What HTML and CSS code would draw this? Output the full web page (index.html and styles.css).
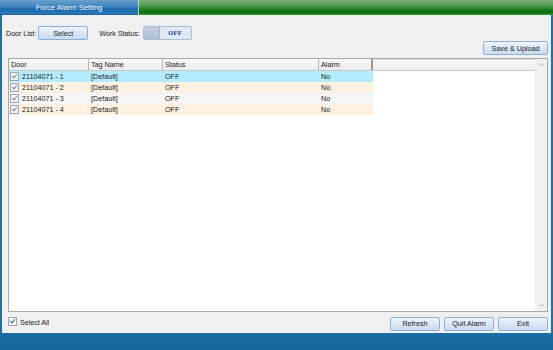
FILE: index.html
```html
<html>
<head>
<title>Force Alarm Setting</title>
<link rel="stylesheet" href="styles.css">
</head>
<body>
<div class="window">
 <div class="topbar">
  <div class="tab">Force Alarm Setting</div>
  <div class="greenbar"></div>
 </div>
 <div class="main">
  <div class="toolbar">
   <span class="lbl">Door List:</span>
   <button type="button" class="btn selbtn">Select</button>
   <span class="lbl worklbl">Work Status:</span>
   <div class="toggle"><span class="knob"></span><span class="togtxt">OFF</span></div>
  </div>
  <div class="saverow">
   <button type="button" class="btn savebtn">Save &amp; Upload</button>
  </div>
  <div class="tablebox">
   <div class="tablearea">
    <div class="thead">
     <div class="th c1">Door</div>
     <div class="th c2">Tag Name</div>
     <div class="th c3">Status</div>
     <div class="th c4">Alarm</div>
     <div class="th c5"></div>
    </div>
    <div class="trow sel">
     <div class="td c1"><span class="chk"></span>21104071 - 1</div>
     <div class="td c2">[Default]</div>
     <div class="td c3">OFF</div>
     <div class="td c4">No</div>
    </div>
    <div class="trow alt">
     <div class="td c1"><span class="chk"></span>21104071 - 2</div>
     <div class="td c2">[Default]</div>
     <div class="td c3">OFF</div>
     <div class="td c4">No</div>
    </div>
    <div class="trow">
     <div class="td c1"><span class="chk"></span>21104071 - 3</div>
     <div class="td c2">[Default]</div>
     <div class="td c3">OFF</div>
     <div class="td c4">No</div>
    </div>
    <div class="trow alt">
     <div class="td c1"><span class="chk"></span>21104071 - 4</div>
     <div class="td c2">[Default]</div>
     <div class="td c3">OFF</div>
     <div class="td c4">No</div>
    </div>
   </div>
   <div class="scrollbar">
    <svg width="7" height="5" viewBox="0 0 7 5"><path d="M1 4 L3.5 1.5 L6 4" fill="none" stroke="#b4b4b4" stroke-width="1"/></svg>
    <svg width="7" height="5" viewBox="0 0 7 5"><path d="M1 1 L3.5 3.5 L6 1" fill="none" stroke="#b4b4b4" stroke-width="1"/></svg>
   </div>
  </div>
  <div class="footer">
   <span class="chk allchk"></span>
   <span class="lbl">Select All</span>
   <div class="spacer"></div>
   <button type="button" class="btn fbtn">Refresh</button>
   <button type="button" class="btn fbtn">Quit Alarm</button>
   <button type="button" class="btn fbtn">Exit</button>
  </div>
 </div>
 <div class="bottombar"></div>
</div>
</body>
</html>
```

FILE: styles.css
```css
body {
 margin: 0;
 font-family: "Liberation Sans", Arial, sans-serif;
 font-size: 7.2px;
 color: #1a1a1a;
}
.window {
 width: 553px;
 height: 350px;
 display: flex;
 flex-direction: column;
 overflow: hidden;
}
.topbar {
 height: 15px;
 display: flex;
}
.tab {
 width: 138px;
 border-right: 1px solid #b8d0c0;
 background: linear-gradient(#6aa0cc, #3d84c0 45%, #1e68a8 60%, #2a78b8 90%, #145a90);
 color: #f4f8ff;
 font-size: 7.6px;
 line-height: 15px;
 text-align: center;
}
.greenbar {
 flex: 1;
 background: linear-gradient(#7fb07f, #4a9a4a 40%, #1f7a1f 65%, #0d6b0d 85%, #3aa63a);
}
.main {
 height: 318px;
 background: #f0f0f0;
 border-left: 2px solid #1f6fa6;
 border-right: 2px solid #1f6fa6;
 padding: 0 3px 0 6px;
 display: flex;
 flex-direction: column;
}
.toolbar {
 margin: 11px 0 0 -2px;
 height: 14px;
 display: flex;
 align-items: center;
}
.lbl {
 white-space: nowrap;
 letter-spacing: -0.05px;
}
.btn {
 font-family: "Liberation Sans", Arial, sans-serif;
 font-size: 7.2px;
 color: #1a1a1a;
 height: 14px;
 padding: 0;
 border: 1px solid #8fb0d4;
 border-radius: 2px;
 background: linear-gradient(#eef4fb, #dbe7f5 50%, #c9dbf0);
}
.selbtn {
 width: 50px;
 margin-left: 2px;
}
.worklbl {
 margin-left: 11px;
}
.toggle {
 margin-left: 3px;
 width: 49px;
 height: 14px;
 box-sizing: border-box;
 border: 1px solid #a9bdd6;
 border-radius: 2px;
 display: flex;
 background: #dfe9f6;
}
.knob {
 width: 15px;
 background: linear-gradient(#c3d0de, #aebfd2);
 border-right: 1px solid #a0b4cc;
}
.togtxt {
 flex: 1;
 text-align: center;
 font-family: "Liberation Serif", "Times New Roman", serif;
 font-weight: bold;
 font-size: 6.5px;
 line-height: 12px;
 color: #1c3e90;
 letter-spacing: 0.3px;
}
.saverow {
 margin-top: 1px;
 display: flex;
 justify-content: flex-end;
}
.savebtn {
 width: 65px;
}
.tablebox {
 margin-top: 3px;
 height: 254px;
 box-sizing: border-box;
 border: 1px solid #a8a8a8;
 background: #fff;
 display: flex;
}
.tablearea {
 flex: 1;
}
.thead {
 display: flex;
 height: 11px;
 border-bottom: 1px solid #c8c8c8;
 background: linear-gradient(#fafafa, #ececec);
}
.th {
 box-sizing: border-box;
 line-height: 11px;
 padding-left: 2px;
 border-right: 1px solid #b4b4b4;
}
.th.c4 {
 border-right: 2px solid #9a9a9a;
}
.th.c5 {
 flex: 1;
 border-right: none;
 border-top: 1px solid #dcdcdc;
}
.c1 { width: 80px; }
.c2 { width: 74px; }
.c3 { width: 156px; }
.c4 { width: 54px; }
.trow {
 display: flex;
 height: 11px;
 width: 364px;
 background: #f6f6f6;
}
.trow.sel {
 background: #b3ecfe;
}
.trow.alt {
 background: #fdf1e2;
}
.td {
 box-sizing: border-box;
 line-height: 11px;
 padding-left: 2px;
 display: flex;
 align-items: center;
 white-space: nowrap;
}
.td.c1 {
 padding-left: 1px;
}
.chk {
 width: 7px;
 height: 7px;
 border: 1px solid #9aa6b2;
 background: #f4f6f8;
 margin-right: 3px;
 position: relative;
 flex: none;
}
.chk::after {
 content: "";
 position: absolute;
 left: 2px;
 top: 0px;
 width: 2px;
 height: 4px;
 border-right: 1px solid #6a84a6;
 border-bottom: 1px solid #6a84a6;
 transform: rotate(40deg);
}
.scrollbar {
 width: 12px;
 background: #f0f0f0;
 display: flex;
 flex-direction: column;
 justify-content: space-between;
 align-items: center;
 padding: 3px 0;
 box-sizing: border-box;
}
.footer {
 height: 21px;
 display: flex;
 align-items: center;
}
.allchk {
 margin-right: 3px;
 margin-top: -2px;
}
.allchk::after {
 border-color: #3b5fa0;
}
.spacer {
 flex: 1;
}
.fbtn {
 width: 50px;
 margin-left: 4px;
 margin-top: 2px;
}
.bottombar {
 flex: 1;
 background: linear-gradient(#1b6ea2, #14679b);
}
```
